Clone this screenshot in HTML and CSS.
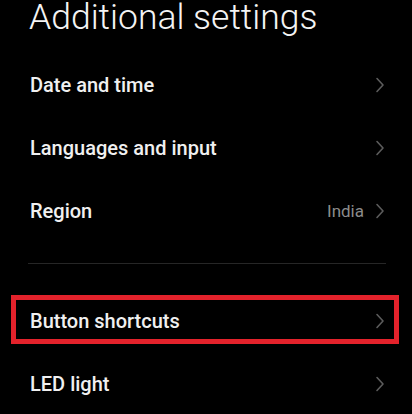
FILE: index.html
```html
<!DOCTYPE html>
<html lang="en">
<head>
<meta charset="utf-8">
<title>Additional settings</title>
<link rel="stylesheet" href="styles.css">
</head>
<body>
  <main class="screen">
    <h1 class="page-title">Additional settings</h1>

    <ul class="settings-group">
      <li class="setting-row">
        <span class="setting-label">Date and time</span>
        <span class="setting-end">
          <svg class="chevron" viewBox="0 0 10 16" aria-hidden="true"><path d="M2 1.5 L8 8 L2 14.5"/></svg>
        </span>
      </li>
      <li class="setting-row">
        <span class="setting-label">Languages and input</span>
        <span class="setting-end">
          <svg class="chevron" viewBox="0 0 10 16" aria-hidden="true"><path d="M2 1.5 L8 8 L2 14.5"/></svg>
        </span>
      </li>
      <li class="setting-row">
        <span class="setting-label">Region</span>
        <span class="setting-end">
          <span class="setting-value">India</span>
          <svg class="chevron" viewBox="0 0 10 16" aria-hidden="true"><path d="M2 1.5 L8 8 L2 14.5"/></svg>
        </span>
      </li>
    </ul>

    <hr class="group-divider">

    <ul class="settings-group">
      <li class="setting-row is-highlighted">
        <span class="setting-label">Button shortcuts</span>
        <span class="setting-end">
          <svg class="chevron" viewBox="0 0 10 16" aria-hidden="true"><path d="M2 1.5 L8 8 L2 14.5"/></svg>
        </span>
      </li>
      <li class="setting-row">
        <span class="setting-label">LED light</span>
        <span class="setting-end">
          <svg class="chevron" viewBox="0 0 10 16" aria-hidden="true"><path d="M2 1.5 L8 8 L2 14.5"/></svg>
        </span>
      </li>
    </ul>
  </main>
</body>
</html>
```

FILE: styles.css
```css
html, body {
  margin: 0;
  padding: 0;
  background: #000;
}

.screen {
  width: 412px;
  height: 414px;
  overflow: hidden;
  font-family: Roboto, "Noto Sans", sans-serif;
  color: #f2f2f2;
}

.page-title {
  margin: 0;
  padding-left: 29px;
  font-size: 35.5px;
  font-weight: 300;
  line-height: 34px;
  color: #f4f4f4;
  letter-spacing: 0;
}

.settings-group {
  list-style: none;
  margin: 0;
  padding: 0;
}

.page-title + .settings-group {
  margin-top: 19px;
}

.setting-row {
  position: relative;
  height: 63px;
  display: flex;
  align-items: center;
  justify-content: space-between;
  padding: 0 27px 0 30px;
}

.setting-label {
  font-size: 20px;
  font-weight: 500;
  color: #f0f0f0;
}

.setting-end {
  display: flex;
  align-items: center;
  gap: 11px;
}

.setting-value {
  font-size: 17px;
  font-weight: 400;
  color: #8c8c8c;
}

.chevron {
  width: 10px;
  height: 16px;
  fill: none;
  stroke: #5c5c5c;
  stroke-width: 1.6;
  stroke-linecap: round;
  stroke-linejoin: round;
}

.group-divider {
  margin: 21px 26px 25px 28px;
  border: 0;
  height: 1px;
  background: #262626;
}

/* red frame drawn over the highlighted row */
.is-highlighted::after {
  content: "";
  position: absolute;
  top: 6px;
  bottom: 8px;
  left: 11px;
  right: 13px;
  border: 5px solid #e3222b;
  pointer-events: none;
}
```
